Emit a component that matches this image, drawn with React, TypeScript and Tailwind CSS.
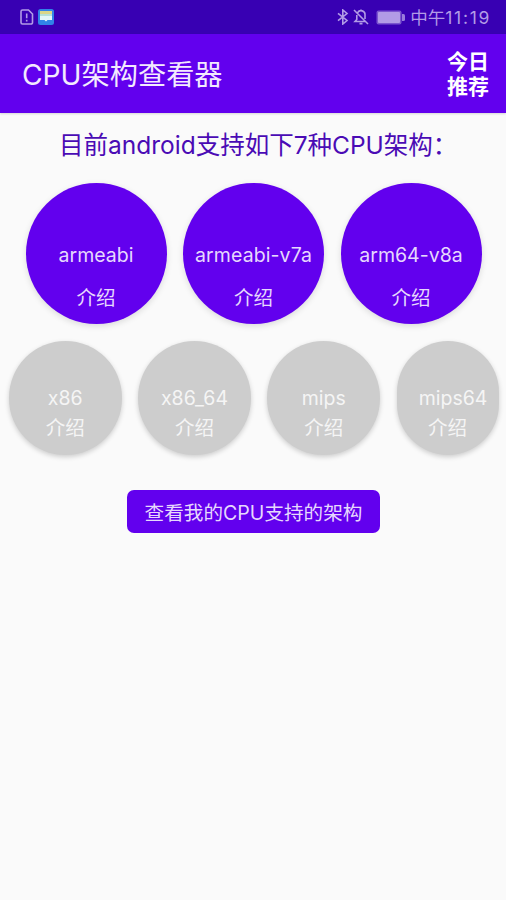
import { clsx } from 'clsx'

type Arch = {
  name: string
  nameClassName?: string
  className?: string
}

const supported: Arch[] = [
  { name: 'armeabi' },
  { name: 'armeabi-v7a', nameClassName: 'tracking-[0.1px]' },
  { name: 'arm64-v8a' },
]

const unsupported: Arch[] = [
  { name: 'x86', className: 'w-[113px]' },
  { name: 'x86_64', className: 'w-[113px]', nameClassName: 'tracking-[0.1px]' },
  { name: 'mips', className: 'w-[113px]' },
  { name: 'mips64', className: 'w-[102px]', nameClassName: 'pl-[11px]' },
]

const StatusBar = () => (
  <div className="flex h-[34px] items-center bg-[#3800b3] pr-[15px] pl-5 text-[#b29be6]">
    <svg className="h-4 w-3.5" viewBox="0 0 14 16" fill="none" stroke="currentColor" strokeWidth="1.6">
      <path d="M2.5 1h6L12.5 5v8.5a1.5 1.5 0 0 1-1.5 1.5H2.5A1.5 1.5 0 0 1 1 13.5v-11A1.5 1.5 0 0 1 2.5 1Z" />
      <path d="M6.7 4.5v4.8M6.7 10.7v1.8" />
    </svg>
    <svg className="ml-[4px] h-4 w-4" viewBox="0 0 16 16">
      <rect width="16" height="16" rx="2.5" fill="#3183e8" />
      <path d="M2 2h12v5H2z" fill="#d9d68a" />
      <path d="M2 5h12v6H9.5L8 12.5 6.5 11H2z" fill="#e2f6fa" />
      <path d="M2 5h12v2H2z" fill="#b5e0d8" />
    </svg>
    <div className="flex-1" />
    <svg className="h-4 w-3" viewBox="0 0 12 16" fill="none" stroke="currentColor" strokeWidth="1.6">
      <path d="M1 4.3l9 7.2L5.8 15V1L10 4.5 1 11.7" />
    </svg>
    <svg className="ml-[4px] h-4 w-4" viewBox="0 0 16 16" fill="none" stroke="currentColor" strokeWidth="1.6">
      <path d="M4.6 3.6A4 4 0 0 1 12 6v4M3.8 6v4.5L2 12.5h10.5M6.5 14.6h3M8 .5v1.8M1 1l14 14" />
    </svg>
    <svg className="ml-[7px] h-[15px] w-[29px]" viewBox="0 0 29 15" fill="currentColor">
      <rect x=".5" y=".5" width="25" height="14" rx="2" opacity=".55" />
      <rect x="2" y="2" width="22" height="11" rx="1" />
      <path d="M26 4h1.5A1.5 1.5 0 0 1 29 5.5v4a1.5 1.5 0 0 1-1.5 1.5H26z" opacity=".8" />
    </svg>
    <span className="ml-[5px] pt-[2px] text-[17.5px] leading-none whitespace-nowrap">
      中午<span className="tracking-[1.7px]">11:19</span>
    </span>
  </div>
)

const ArchCircle = ({ arch, active }: { arch: Arch; active?: boolean }) => (
  <button
    className={clsx(
      'flex shrink-0 flex-col items-center rounded-full text-[19.5px] leading-6 whitespace-nowrap',
      active
        ? 'h-[141px] w-[141px] bg-[#6200ee] pt-[60px] text-[#e6d8fd] shadow-[0_2px_6px_rgba(0,0,0,0.13)]'
        : 'h-[114px] bg-[#cdcdcd] pt-[45px] text-[#f5f5f5] shadow-[0_2px_5px_rgba(0,0,0,0.18)]',
      arch.className,
    )}
  >
    <span className={arch.nameClassName}>{arch.name}</span>
    <span className={active ? 'mt-[19px]' : 'mt-[6px]'}>介绍</span>
  </button>
)

const App = () => (
  <div className="h-[900px] w-[506px] overflow-hidden bg-[#fafafa] font-['Inter','Noto_Sans_CJK_SC',sans-serif]">
    <StatusBar />
    <header className="flex h-[79px] items-center justify-between bg-[#6200ee] pr-[17px] pl-[22px] text-[#f3eafe] shadow-[0_1px_2px_rgba(0,0,0,0.15)]">
      <h1 className="pt-[4px] text-[28.2px] leading-none whitespace-nowrap">CPU架构查看器</h1>
      <div className="text-[21px] leading-[25px] font-bold text-white">
        <p>今日</p>
        <p>推荐</p>
      </div>
    </header>

    <main className="flex flex-col">
      <h2 className="mt-[16px] pl-[59px] text-[24.5px] leading-8 whitespace-nowrap text-[#4a0bb5]">
        目前android支持如下7种CPU架构：
      </h2>

      <div className="mt-[22px] flex gap-[16.5px] pl-[25.5px]">
        {supported.map((arch) => (
          <ArchCircle active arch={arch} key={arch.name} />
        ))}
      </div>

      <div className="mt-[17px] flex gap-[16.3px] pl-[8.7px]">
        {unsupported.map((arch) => (
          <ArchCircle arch={arch} key={arch.name} />
        ))}
      </div>

      <button className="mt-[35px] ml-[127px] h-[43px] w-[253px] rounded-[7px] bg-[#6200ee] pt-[5px] text-[19.6px] leading-none whitespace-nowrap text-[#e6d8fd]">
        查看我的CPU支持的架构
      </button>
    </main>
  </div>
)

export default App
